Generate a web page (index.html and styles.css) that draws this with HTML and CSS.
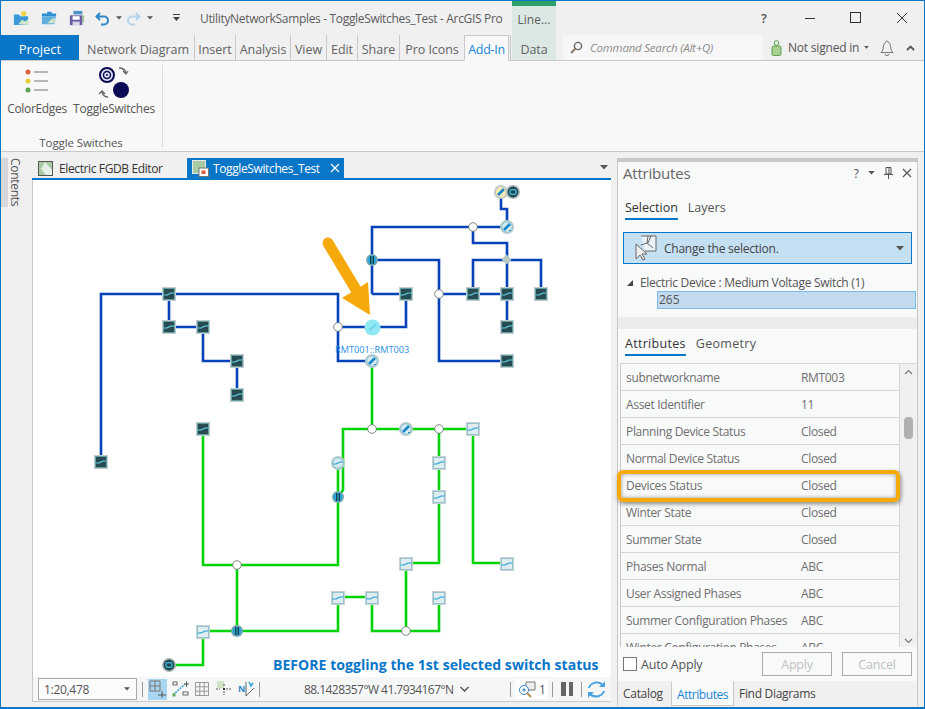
FILE: index.html
```html
<!DOCTYPE html>
<html lang="en">
<head>
<meta charset="utf-8">
<title>ArcGIS Pro</title>
<link rel="stylesheet" href="styles.css">
</head>
<body>
<svg class="defs" width="0" height="0">
  <defs>
    <symbol id="sq-d" viewBox="-7 -7 14 14" overflow="visible"><rect x="-7" y="-7" width="14" height="14" fill="#c4cdcd"/><rect x="-5.5" y="-5.500" width="11" height="11" fill="#274b50" stroke="#5ba3a8" stroke-width=".8"/><path d="M-5.500 1H-2L2-1H5.500" fill="none" stroke="#63d6ef" stroke-width="1.200"/></symbol>
    <symbol id="sq-l" viewBox="-7 -7 14 14" overflow="visible"><rect x="-7" y="-7" width="14" height="14" fill="#c6d2d4"/><rect x="-5.500" y="-5.500" width="11" height="11" fill="#dfedf0" stroke="#86bcc8" stroke-width=".8"/><path d="M-5.500 1H-2L2-1H5.500" fill="none" stroke="#1f9fd8" stroke-width="1.200"/></symbol>
    <symbol id="gauge" viewBox="-7 -7 14 14" overflow="visible"><circle r="7" fill="#bdc8c8"/><circle r="5.200" fill="#d8eaee" stroke="#6cc6dc" stroke-width=".8"/><path d="M-3 3L3-3" stroke="#1688c8" stroke-width="2.600"/><path d="M2 3.500h2" stroke="#1688c8"/></symbol>
    <symbol id="gauge-h" viewBox="-7 -7 14 14" overflow="visible"><circle r="7" fill="#bdc8c8"/><circle r="5.200" fill="#d8eaee" stroke="#6cc6dc" stroke-width=".8"/><path d="M-5 1H-2L2-1H5" fill="none" stroke="#1f9fd8" stroke-width="1.200"/></symbol>
    <symbol id="gauge-y" viewBox="-7 -7 14 14" overflow="visible"><circle r="7" fill="#bdc8c8"/><circle r="5.200" fill="#f6e8b4"/><path d="M-3 3L3-3" stroke="#1688c8" stroke-width="2.600"/></symbol>
    <symbol id="bars" viewBox="-6 -6 12 12" overflow="visible"><circle r="6" fill="#7fa6b2"/><circle r="4.600" fill="#2aa5d6"/><path d="M-1.300-4V4M1.300-4V4" stroke="#173a40" stroke-width="1.300"/></symbol>
    <symbol id="sync" viewBox="-7 -7 14 14" overflow="visible"><circle r="7" fill="#a9b4b4"/><circle r="5.400" fill="#22474d"/><rect x="-3" y="-2.400" width="6" height="4.800" rx="1.600" fill="none" stroke="#3cc3e6" stroke-width="1.300"/></symbol>
    <symbol id="junc" viewBox="-5 -5 10 10" overflow="visible"><circle r="4.300" fill="#fff" stroke="#6f7a75" stroke-width=".9"/></symbol>
    <symbol id="caret" viewBox="0 0 8 5"><path d="M0 0H8L4 4.500Z" fill="#555"/></symbol>
  </defs>
</svg>
<div class="window">
  <header class="titlebar">
    <div class="qa">
      <svg class="qa-ico" width="16" height="16" viewBox="0 0 18 18"><path d="M1 5h6l1 2h9v10H1z" fill="#3b9ad6"/><path d="M6 16l4-5 4 2 3-3v7z" fill="#cfe6c8"/><circle cx="12" cy="4" r="3" fill="#f2d24b"/></svg>
      <svg class="qa-ico" width="16" height="16" viewBox="0 0 18 18"><path d="M1 4h6v-2h5v2h5v3H1z" fill="#2f8fd0"/><path d="M1 7h16l-2 9H1z" fill="#5eaedf"/><path d="M7 15l5-5 4-1-1 6z" fill="#cfe6c8"/></svg>
      <svg class="qa-ico qa-last" width="16" height="16" viewBox="0 0 18 18"><path d="M5 1h10v4H5z" fill="#4d93c9"/><path d="M1 6h14v11H1z" fill="#6b5ca5"/><path d="M4 7h8v4H4z" fill="#fff"/><path d="M4 13h8v4H4z" fill="#d8d8e8"/><path d="M15 6h2v8h-2z" fill="#9cc58f"/></svg>
      <svg width="15" height="15" viewBox="0 0 15 15"><path d="M5 2L1.500 5.500 5 9M2 5.500H9a4 4 0 0 1 0 8H6" fill="none" stroke="#2e86c9" stroke-width="2"/></svg>
      <svg class="car" width="6" height="4"><use href="#caret"/></svg>
      <svg width="15" height="15" viewBox="0 0 15 15"><path d="M10 2l3.500 3.500L10 9M13 5.500H6a4 4 0 0 0 0 8h3" fill="none" stroke="#b4d4ec" stroke-width="2"/></svg>
      <svg class="car" width="6" height="4"><use href="#caret"/></svg>
      <svg class="custom" width="7" height="8" viewBox="0 0 7 8"><path d="M0 .5H7" stroke="#444"/><path d="M0 3H7L3.500 7Z" fill="#444"/></svg>
    </div>
    <div class="doc-title">UtilityNetworkSamples - ToggleSwitches_Test - ArcGIS Pro</div>
    <div class="context-head">Line...</div>
    <div class="help">?</div>
    <div class="winctl">
      <svg width="12" height="12" viewBox="0 0 12 12"><path d="M1 6.500H11" stroke="#333"/></svg>
      <svg width="12" height="12" viewBox="0 0 12 12"><rect x=".5" y=".5" width="10" height="10" fill="none" stroke="#333"/></svg>
      <svg width="12" height="12" viewBox="0 0 12 12"><path d="M1 1L11 11M11 1L1 11" stroke="#333"/></svg>
    </div>
  </header>

  <nav class="tabs">
    <div class="tab tab-project">Project</div>
    <div class="tab sep tab-network">Network Diagram</div>
    <div class="tab sep">Insert</div>
    <div class="tab sep">Analysis</div>
    <div class="tab sep">View</div>
    <div class="tab sep">Edit</div>
    <div class="tab sep">Share</div>
    <div class="tab">Pro Icons</div>
    <div class="tab tab-active">Add-In</div>
    <div class="tab-gap"></div>
    <div class="tab tab-context">Data</div>
    <div class="search">
      <svg width="13" height="13" viewBox="0 0 13 13"><circle cx="8" cy="5" r="3.600" fill="none" stroke="#666" stroke-width="1.400"/><path d="M5.500 7.500L1 12" stroke="#8a7a64" stroke-width="2"/></svg>
      <span>Command Search (Alt+Q)</span>
    </div>
    <div class="user">
      <svg width="11" height="16" viewBox="0 0 11 16"><circle cx="5.500" cy="3" r="2.300" fill="#e6f0df" stroke="#5d9e55"/><rect x="1" y="6" width="9" height="9.500" rx="1.500" fill="#a9d08e" stroke="#5d9e55"/></svg>
      <span class="user-name">Not signed in</span>
      <svg width="5" height="3"><use href="#caret"/></svg>
      <svg class="bell" width="14" height="16" viewBox="0 0 14 16"><path d="M7 1a1 1 0 0 0-1 1C3.500 3 3.500 6 3 9c-.3 1.500-1.500 3-2 3.500h12c-.5-.5-1.700-2-2-3.500-.5-3-.5-6-3-7a1 1 0 0 0-1-1zM5 14a2 1.500 0 0 0 4 0" fill="none" stroke="#777"/></svg>
      <svg class="chev" width="9" height="6" viewBox="0 0 9 6"><path d="M1 5L4.500 1.500 8 5" fill="none" stroke="#555" stroke-width="1.800"/></svg>
    </div>
  </nav>

  <section class="ribbon">
    <div class="rgroup">
      <div class="rbtns">
        <div class="rbtn rbtn-color">
          <svg width="24" height="24" viewBox="0 0 24 24"><circle cx="3" cy="3" r="2.500" fill="#d9603c"/><circle cx="3" cy="12" r="2.500" fill="#e8cf3a"/><circle cx="3" cy="21" r="2.500" fill="#5fa84f"/><path d="M9 3H23M9 12H23M9 21H23" stroke="#777"/></svg>
          <span>ColorEdges</span>
        </div>
        <div class="rbtn rbtn-toggle">
          <svg width="32" height="32" viewBox="0 0 32 32"><circle cx="9" cy="9" r="7" fill="#dfe0f0" stroke="#0a0a55" stroke-width="2"/><circle cx="9" cy="9" r="3.500" fill="none" stroke="#0a0a55" stroke-width="1.500"/><circle cx="9" cy="9" r="1" fill="#0a0a55"/><circle cx="23" cy="24" r="8" fill="#0a0a55"/><path d="M21 2c3 0 6 1 7 5M25 5l3 3 2-3" fill="none" stroke="#666" stroke-width="1.300"/><path d="M10 31c-3 0-5-1-6-5M1 28l3-3 3 3" fill="none" stroke="#666" stroke-width="1.300"/></svg>
          <span>ToggleSwitches</span>
        </div>
      </div>
      <div class="rlabel">Toggle Switches</div>
    </div>
    <div class="rsep"></div>
  </section>

  <main class="workspace">
    <aside class="rail"><div class="rail-tab">Contents</div></aside>

    <section class="center">
      <div class="viewtabs">
        <div class="vtab">
          <svg width="15" height="15" viewBox="0 0 15 15"><rect x=".5" y=".5" width="14" height="14" fill="#a8cba3" stroke="#555"/><path d="M7 1l7 8v5H8L3 8z" fill="#e6efe8"/></svg>
          <span>Electric FGDB Editor</span>
        </div>
        <div class="vtab vtab-active">
          <svg width="17" height="17" viewBox="0 0 17 17"><rect x=".5" y=".5" width="13" height="13" fill="#a8cba3" stroke="#e8e8e8"/><rect x="7" y="8" width="9.500" height="8.500" fill="#fff" stroke="#777"/><rect x="9.500" y="10.500" width="4" height="3.500" fill="#d9603c"/></svg>
          <span>ToggleSwitches_Test</span>
          <svg class="vclose" width="10" height="10" viewBox="0 0 10 10"><path d="M1 1L9 9M9 1L1 9" stroke="#fff" stroke-width="1.200"/></svg>
        </div>
        <svg class="vmenu" width="8" height="5"><use href="#caret"/></svg>
      </div>

      <div class="map">
        <svg class="diagram" width="577" height="497" viewBox="33 180 577 497">
          <g class="net-blue">
            <path d="M101 462V294H338V361H372"/>
            <path d="M338 327H406V294"/>
            <path d="M169 294V327H203V361H237V395"/>
            <path d="M372 294V227H507"/>
            <path d="M372 294H406"/>
            <path d="M473 227V243H507V327"/>
            <path d="M372 260H439V361H507"/>
            <path d="M439 294H507"/>
            <path d="M473 294V260H541V294"/>
            <path d="M507 227V209H501V192"/>
          </g>
          <g class="net-green">
            <path d="M372 361V429"/>
            <path d="M338 463L338 565H203V429"/>
            <path d="M338 497L343 490V429H473V563H507"/>
            <path d="M237 565V631"/>
            <path d="M169 665H203V631H338V597H372V631H439V597"/>
            <path d="M406 631V563H439V429"/>
          </g>
          <g>
            <use href="#sq-d" x="162" y="287" width="14" height="14"/>
            <use href="#sq-d" x="162" y="320" width="14" height="14"/>
            <use href="#sq-d" x="196" y="320" width="14" height="14"/>
            <use href="#sq-d" x="230" y="354" width="14" height="14"/>
            <use href="#sq-d" x="230" y="388" width="14" height="14"/>
            <use href="#sq-d" x="196" y="422" width="14" height="14"/>
            <use href="#sq-d" x="94" y="455" width="14" height="14"/>
            <use href="#sq-d" x="399" y="287" width="14" height="14"/>
            <use href="#sq-d" x="466" y="287" width="14" height="14"/>
            <use href="#sq-d" x="500" y="287" width="14" height="14"/>
            <use href="#sq-d" x="534" y="287" width="14" height="14"/>
            <use href="#sq-d" x="500" y="320" width="14" height="14"/>
            <use href="#sq-d" x="500" y="354" width="14" height="14"/>
            <use href="#sq-l" x="466" y="422" width="14" height="14"/>
            <use href="#sq-l" x="432" y="456" width="14" height="14"/>
            <use href="#sq-l" x="432" y="490" width="14" height="14"/>
            <use href="#sq-l" x="399" y="557" width="14" height="14"/>
            <use href="#sq-l" x="500" y="557" width="14" height="14"/>
            <use href="#sq-l" x="331" y="591" width="14" height="14"/>
            <use href="#sq-l" x="365" y="591" width="14" height="14"/>
            <use href="#sq-l" x="432" y="591" width="14" height="14"/>
            <use href="#sq-l" x="196" y="625" width="14" height="14"/>
            <use href="#gauge" x="500" y="220" width="14" height="14"/>
            <use href="#gauge" x="365" y="354" width="14" height="14"/>
            <use href="#gauge" x="399" y="422" width="14" height="14"/>
            <use href="#gauge-h" x="331" y="456" width="14" height="14"/>
            <use href="#gauge-y" x="494" y="185" width="14" height="14"/>
            <use href="#sync" x="506" y="185" width="14" height="14"/>
            <use href="#sync" x="162" y="658" width="14" height="14"/>
            <use href="#bars" x="366" y="254" width="12" height="12"/>
            <use href="#bars" x="332" y="491" width="12" height="12"/>
            <use href="#bars" x="231" y="625" width="12" height="12"/>
            <use href="#junc" x="333" y="322" width="10" height="10"/>
            <use href="#junc" x="468" y="222" width="10" height="10"/>
            <use href="#junc" x="434" y="289" width="10" height="10"/>
            <use href="#junc" x="367" y="424" width="10" height="10"/>
            <use href="#junc" x="434" y="424" width="10" height="10"/>
            <use href="#junc" x="232" y="560" width="10" height="10"/>
            <use href="#junc" x="401" y="626" width="10" height="10"/>
            <rect x="503" y="256" width="7" height="7" fill="#b9c9c0" transform="rotate(45 506.500 259.500)"/>
            <circle cx="372.500" cy="327.500" r="8" fill="#8fe9f2"/>
            <path d="M369 330L376 325" stroke="#6fd2e4" stroke-width="2"/>
          </g>
          <text class="sel-label" x="335" y="353">RMT001::RMT003</text>
          <g class="arrow">
            <path d="M328 243L361 298" stroke="#f5a90a" stroke-width="11" stroke-linecap="round" fill="none"/>
            <path d="M342 298L368 282L370 315Z" fill="#f5a90a"/>
          </g>
          <text class="caption" x="273" y="670">BEFORE toggling the 1st selected switch status</text>
        </svg>
      </div>

      <footer class="status">
        <div class="scale"><span>1:20,478</span><svg width="6" height="4"><use href="#caret"/></svg></div>
        <i class="vbar"></i>
        <div class="sicons">
          <span class="sicon sicon-on"><svg width="18" height="18" viewBox="0 0 18 18"><path d="M1 1H11V11H1ZM1 6H11M6 1V11" fill="none" stroke="#777"/><path d="M9 15H17M13 11V18" stroke="#555"/></svg></span>
          <span class="sicon"><svg width="17" height="16" viewBox="0 0 17 16"><path d="M1 14L13 3" stroke="#2e9fd6" stroke-dasharray="2 1" stroke-width="1.500"/><rect x=".5" y="12.500" width="3" height="3" fill="#5fa84f"/><rect x="1" y="1" width="4" height="3" fill="none" stroke="#666"/><rect x="11" y="11" width="5" height="3" fill="none" stroke="#666"/><path d="M12 3H17M14.500 .5V6" stroke="#555"/></svg></span>
          <span class="sicon"><svg width="14" height="14" viewBox="0 0 14 14"><path d="M.5.500H13.500V13.500H.5ZM.5 4.800H13.500M.5 9.200H13.500M4.800.5V13.500M9.200.5V13.500" fill="none" stroke="#999"/></svg></span>
          <span class="sicon"><svg width="16" height="16" viewBox="0 0 16 16"><rect x="1" y="0" width="7" height="7" fill="#cfe2c6"/><path d="M0 8H4M10 8H15M8 3V6M8 10V14" stroke="#555" stroke-dasharray="2 1"/><rect x="7" y="7" width="2" height="2" fill="#333"/></svg></span>
          <span class="sicon"><svg width="17" height="16" viewBox="0 0 17 16"><text class="north" x="0" y="11">N</text><path d="M8 1V15L16 7" fill="none" stroke="#666"/><path d="M11 1L13 5L15 2" fill="none" stroke="#2e9fd6" stroke-width="1.500"/></svg></span>
        </div>
        <i class="vbar vbar-s"></i>
        <div class="coords">88.1428357°W 41.7934167°N</div>
        <svg class="coord-chev" width="9" height="6" viewBox="0 0 9 6"><path d="M.5 1L4.500 5 8.500 1" fill="none" stroke="#555" stroke-width="1.500"/></svg>
        <i class="vbar vbar-a"></i>
        <div class="selcount">
          <svg width="18" height="17" viewBox="0 0 18 17"><path d="M8 1H17V9H8z" fill="#eee" stroke="#777"/><circle cx="6" cy="9" r="4.500" fill="#fff" stroke="#2e86c9"/><path d="M4 9H8M6 7V11" stroke="#2e86c9"/><path d="M9 12L13 16" stroke="#b98f52" stroke-width="2"/></svg>
          <span>1</span>
        </div>
        <i class="vbar vbar-c"></i>
        <div class="pause"><i></i><i></i></div>
        <i class="vbar vbar-p"></i>
        <svg class="refresh" width="17" height="17" viewBox="0 0 17 17"><path d="M2 7C3 3 9 1 13 4L11 6H17V0L15 2.500C10-1.500 2 .5 0 7ZM15 10C14 14 8 16 4 13L6 11H0V17L2 14.500C7 18.500 15 16.500 17 10Z" fill="#4aa3df"/></svg>
      </footer>
    </section>

    <aside class="panel">
      <div class="panel-grip"></div>
      <div class="panel-head">
        <span class="panel-title">Attributes</span>
        <div class="panel-ctl">
          <span class="q">?</span>
          <svg width="7" height="4"><use href="#caret"/></svg>
          <svg width="9" height="12" viewBox="0 0 9 12"><path d="M2 .5H7V7H2ZM0 7.500H9M4.500 7.500V12M5 1V7" fill="none" stroke="#555"/></svg>
          <svg width="10" height="10" viewBox="0 0 10 10"><path d="M1 1L9 9M9 1L1 9" stroke="#555" stroke-width="1.200"/></svg>
        </div>
      </div>
      <div class="subtabs subtabs-top"><span class="subtab subtab-on">Selection</span><span class="subtab">Layers</span></div>
      <div class="chooser">
        <svg width="24" height="26" viewBox="0 0 24 26"><path d="M8 1H23V16H12M15 1L14 8L8 10M14 8L20 13M18 1l-3 7" fill="#eaf2f7" stroke="#666"/><path d="M3 9V24L7 20L10 25L12 24L9 19H14Z" fill="#eee" stroke="#666"/></svg>
        <span class="chooser-text">Change the selection.</span>
        <svg width="8" height="5"><use href="#caret"/></svg>
      </div>
      <div class="tree-head"><svg width="8" height="8" viewBox="0 0 8 8"><path d="M7 1V7H1Z" fill="#444"/></svg><span>Electric Device : Medium Voltage Switch (1)</span></div>
      <div class="tree-sel">265</div>
      <div class="band"></div>
      <div class="subtabs subtabs-low"><span class="subtab subtab-on">Attributes</span><span class="subtab">Geometry</span></div>
      <div class="gridwrap">
        <div class="grid">
          <div class="row"><span>subnetworkname</span><span>RMT003</span></div>
          <div class="row"><span>Asset Identifier</span><span>11</span></div>
          <div class="row"><span>Planning Device Status</span><span>Closed</span></div>
          <div class="row"><span>Normal Device Status</span><span>Closed</span></div>
          <div class="row"><span>Devices Status</span><span>Closed</span></div>
          <div class="row"><span>Winter State</span><span>Closed</span></div>
          <div class="row"><span>Summer State</span><span>Closed</span></div>
          <div class="row"><span>Phases Normal</span><span>ABC</span></div>
          <div class="row"><span>User Assigned Phases</span><span>ABC</span></div>
          <div class="row"><span>Summer Configuration Phases</span><span>ABC</span></div>
          <div class="row"><span>Winter Configuration Phases</span><span>ABC</span></div>
        </div>
        <div class="scroll">
          <svg width="9" height="6" viewBox="0 0 9 6"><path d="M1 5L4.500 1.500 8 5" fill="none" stroke="#777" stroke-width="1.200"/></svg>
          <div class="thumb"></div>
          <svg width="9" height="6" viewBox="0 0 9 6"><path d="M1 1L4.500 4.500 8 1" fill="none" stroke="#777" stroke-width="1.200"/></svg>
        </div>
      </div>
      <div class="highlight"></div>
      <div class="panel-foot">
        <span class="check"></span><span class="auto">Auto Apply</span>
        <span class="btn">Apply</span><span class="btn">Cancel</span>
      </div>
      <div class="dock">
        <span class="dtab">Catalog</span><span class="dtab dtab-on">Attributes</span><span class="dtab">Find Diagrams</span>
      </div>
    </aside>
  </main>
</div>
</body>
</html>
```
FILE: styles.css
```css
* { box-sizing: border-box; }
html, body { margin: 0; padding: 0; }
body { width: 925px; height: 709px; overflow: hidden; font-family: "Open Sans", "Noto Sans", sans-serif; font-size: 12px; color: #555; }
svg { display: block; flex: none; }
.defs { position: absolute; }
.window { width: 925px; height: 709px; border: 1px solid #0a76c8; border-width: 1px 1px 2px 1px; background: #f0f0f0; display: flex; flex-direction: column; }

.titlebar { height: 34px; display: flex; align-items: center; }
.qa { display: flex; align-items: center; width: 199px; padding-left: 12px; flex: none; }
.qa-ico { margin-right: 12px; }
.qa-last { margin-right: 10px; }
.car { margin: 0 4px 0 6px; }
.custom { margin-left: 16px; }
.doc-title { width: 312px; flex: none; font-size: 12px; color: #5c5c5c; white-space: nowrap; letter-spacing: -.33px; }
.context-head { align-self: stretch; width: 44px; flex: none; background: #dce8e3; border-top: 5px solid #2e9e6b; padding-bottom: 3px; display: flex; align-items: center; justify-content: center; font-size: 12px; color: #5c5c5c; }
.help { margin-left: 205px; width: 12px; font-size: 13px; font-weight: 600; color: #555; }
.winctl { margin-left: 31px; display: flex; gap: 34px; }

.tabs { height: 26px; flex: none; display: grid; grid-template-columns: 78px 116px 41px 55px 36px 31px 42px 64px 45px 3px 44px 207px 1fr; border-bottom: 1px solid #c8c8c8; }
.tab { display: flex; align-items: center; justify-content: center; padding-top: 3px; font-size: 12.500px; color: #636363; white-space: nowrap; letter-spacing: -.05px; }
.tab-network { padding-left: 3px; }
.sep { border-right: 1px solid #c8c8c8; }
.tab-project { background: #0a76c8; color: #fff; font-size: 13px; letter-spacing: 0; }
.tab-active { color: #1a86d8; border: 1px solid #c8c8c8; border-bottom: 1px solid #f8f8f8; background: #f8f8f8; margin-bottom: -1px; letter-spacing: -.3px; }
.tab-gap { border-left: 1px solid #c8c8c8; margin-left: 1px; }
.tab-context { background: #dce8e3; }
.search { margin-left: 7px; background: #f7f7f7; display: flex; align-items: center; gap: 7px; padding-left: 7px; font-size: 11.500px; font-style: italic; color: #8c8c8c; letter-spacing: -.22px; white-space: nowrap; }
.user { display: flex; align-items: center; padding-left: 8px; font-size: 12px; color: #555; white-space: nowrap; }
.user-name { margin-left: 6px; letter-spacing: -.2px; width: 76px; }
.bell { margin-left: 11px; }
.chev { margin-left: 12px; }

.ribbon { height: 91px; flex: none; background: #f8f8f8; border-bottom: 1px solid #c8c8c8; display: flex; padding-top: 4px; }
.rgroup { width: 161px; display: flex; flex-direction: column; }
.rsep { width: 1px; height: 82px; background: #dcdcdc; }
.rbtns { display: flex; height: 62px; flex: none; padding-left: 6px; }
.rbtn { display: flex; flex-direction: column; align-items: center; font-size: 12px; color: #555; white-space: nowrap; }
.rbtn-color { width: 60px; padding-top: 4px; letter-spacing: -.33px; }
.rbtn-color span { margin-top: 7px; }
.rbtn-toggle { width: 84px; margin-left: 5px; padding-top: 1px; letter-spacing: -.25px; }
.rbtn-toggle span { margin-top: 2px; }
.rlabel { width: 160px; text-align: center; font-size: 11.500px; line-height: 15px; letter-spacing: -.1px; color: #555; margin-top: 8px; }

.workspace { flex: 1; display: flex; min-height: 0; }
.rail { width: 31px; flex: none; padding-top: 6px; display: flex; align-items: flex-start; }
.rail-tab { writing-mode: vertical-rl; height: 49px; width: 22px; border-left: 7px solid #d8d8d8; font-size: 12px; letter-spacing: -.3px; color: #555; line-height: 15px; text-align: center; }

.center { width: 579px; flex: none; display: flex; flex-direction: column; margin: 0 6px 5px 0; }
.viewtabs { height: 28px; flex: none; padding-top: 6px; display: flex; align-items: stretch; border-bottom: 2px solid #0a76c8; position: relative; }
.vtab { display: flex; align-items: center; gap: 6px; width: 155px; flex: none; padding-left: 6px; font-size: 12px; letter-spacing: -.38px; color: #333; white-space: nowrap; }
.vtab-active { width: 157px; background: #0a76c8; color: #fff; gap: 4px; padding-left: 5px; }
.vclose { margin-left: 6px; }
.vmenu { position: absolute; right: 3px; top: 13px; }

.map { flex: 1; min-height: 0; background: #fff; border-left: 1px solid #c8c8c8; overflow: hidden; }
.diagram { display: block; }
.net-blue path { fill: none; stroke: #0544b8; stroke-width: 2.600; }
.net-green path { fill: none; stroke: #05d30a; stroke-width: 2.600; }
.sel-label { font-family: "Open Sans", sans-serif; font-size: 9.200px; fill: #2b8fe8; }
.caption { font-family: "Open Sans", sans-serif; font-weight: 700; font-size: 14.100px; fill: #0a76c8; }

.status { height: 25px; flex: none; background: #f5f7f7; border-left: 1px solid #c8c8c8; border-bottom: 1px solid #c8c8c8; display: flex; align-items: center; padding-left: 5px; color: #555; }
.scale { width: 99px; flex: none; height: 22px; border: 1px solid #aaa; background: #fbfbfb; display: flex; align-items: center; justify-content: space-between; padding: 0 6px 0 5px; font-size: 12px; letter-spacing: -.3px; }
.vbar { display: block; flex: none; width: 1px; height: 15px; background: #999; margin: 0 5px; }
.sicons { display: flex; align-items: center; flex: none; }
.sicon { width: 22px; height: 21px; flex: none; display: flex; align-items: center; justify-content: center; }
.sicon-on { width: 19px; margin-right: 2px; background: #a8d5f2; }
.north { font-family: "Open Sans", sans-serif; font-weight: 700; font-size: 9px; fill: #2e86c9; }
.vbar-s { margin-left: 2px; }
.coords { margin-left: 39px; width: 150px; flex: none; font-size: 12px; letter-spacing: -.55px; white-space: nowrap; }
.coord-chev { margin-left: 6px; }
.vbar-a { margin-left: 41px; margin-right: 4px; }
.selcount { width: 33px; flex: none; height: 20px; background: #fff; display: flex; align-items: center; gap: 3px; padding-left: 3px; font-size: 12px; }
.vbar-c { margin: 0 3px 0 4px; }
.pause { display: flex; gap: 3px; margin-left: 5px; flex: none; }
.pause i { display: block; width: 4.500px; height: 14px; background: #666; }
.vbar-p { margin: 0 6px 0 8px; }

.panel { width: 301px; flex: none; margin-top: 6px; margin-bottom: 1px; background: #f8f9f9; border-left: 1px solid #c8c8c8; border-right: 1px solid #c8c8c8; display: flex; flex-direction: column; position: relative; }
.panel-grip { height: 4px; flex: none; background: #c8c8c8; }
.panel-head { height: 22px; flex: none; display: flex; align-items: center; justify-content: space-between; padding: 0 5px; }
.panel-title { font-size: 15px; color: #666; letter-spacing: -.2px; }
.panel-ctl { display: flex; align-items: center; gap: 9px; }
.q { font-size: 12px; color: #555; }
.subtabs { display: flex; flex: none; padding-left: 7px; gap: 10px; height: 24px; font-size: 12.500px; color: #555; }
.subtabs-top { margin-top: 12px; }
.subtabs-low { margin-top: 3px; letter-spacing: .3px; }
.subtab { height: 24px; line-height: 24px; }
.subtab-on { color: #333; border-bottom: 2px solid #0a76c8; }
.chooser { margin: 12px 5px 0 5px; height: 32px; flex: none; background: #c5e0f3; border: 1px solid #0a76c8; display: flex; align-items: center; padding: 0 7px 0 9px; gap: 7px; font-size: 12px; letter-spacing: -.25px; color: #444; }
.chooser-text { flex: 1; }
.tree-head { display: flex; align-items: center; gap: 6px; flex: none; margin: 10px 0 0 8px; height: 17px; font-size: 12px; letter-spacing: -.3px; color: #555; white-space: nowrap; }
.tree-sel { margin: 0 1px 0 39px; height: 18px; flex: none; background: #c3d9ee; border: 1px solid #78bbe8; line-height: 16px; padding-left: 1px; font-size: 12px; color: #555; }
.band { height: 12px; flex: none; margin-top: 8px; background: #ececec; }
.gridwrap { display: flex; flex: none; margin: 7px 0 0 2px; height: 284px; border-left: 1px solid #c8c8c8; overflow: hidden; border-top: 1px solid #d6d6d6; }
.grid { width: 279px; flex: none; border-right: 1px solid #d6d6d6; overflow: hidden; }
.row { height: 27px; display: grid; grid-template-columns: 175px 1fr; align-items: center; padding-left: 5px; border-bottom: 1px solid #d6d6d6; font-size: 12px; letter-spacing: -.33px; color: #6f6f6f; white-space: nowrap; }
.scroll { flex: 1; background: #f0f0f0; display: flex; flex-direction: column; align-items: center; padding: 5px 0 3px; }
.thumb { width: 9px; height: 22px; border-radius: 4px; background: #b0b0b0; margin: 42px 0 auto; }
.highlight { position: absolute; left: -1px; top: 312px; width: 283px; height: 32px; border: 4px solid #f5a90a; border-radius: 6px; box-shadow: 1px 2px 4px rgba(0,0,0,.45), inset 0 0 4px rgba(0,0,0,.4); }
.panel-foot { height: 35px; flex: none; display: flex; align-items: center; padding: 0 5px; font-size: 12.500px; color: #555; letter-spacing: -.2px; border-bottom: 1px solid #c8c8c8; }
.check { width: 14px; height: 14px; flex: none; border: 1px solid #777; background: #fff; }
.auto { margin-left: 4px; width: 121px; flex: none; }
.btn { width: 70px; height: 24px; flex: none; border: 1px solid #aaa; margin-right: 10px; display: flex; align-items: center; justify-content: center; color: #c2c2c2; background: #f8f9f9; }
.btn:last-child { margin-right: 0; }
.dock { flex: 1; display: flex; margin-top: -1px; background: #f0f0f0; font-size: 12px; letter-spacing: -.3px; color: #444; }
.dtab { padding: 4px 5px 0 5px; white-space: nowrap; }
.dtab:first-child { width: 53px; }
.dtab-on { color: #1a86d8; background: #f8f9f9; border: 1px solid #c8c8c8; border-top-color: #f8f9f9; width: 63px; height: 25px; letter-spacing: -.45px; }
```
